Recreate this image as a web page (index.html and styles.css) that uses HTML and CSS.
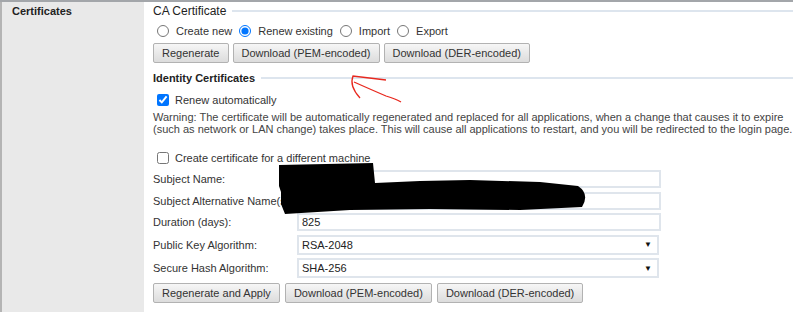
FILE: index.html
```html
<!DOCTYPE html>
<html lang="en">
<head>
    <meta charset="UTF-8">
    <title>Certificates</title>
    <link rel="stylesheet" href="styles.css">
</head>
<body>
    <div class="settings-row">
        <div class="settings-label">Certificates</div>
        <div class="settings-body">
            <div class="section-title"><span>CA Certificate</span></div>
            <div class="radio-row">
                <label><input type="radio" name="ca"> Create new</label>
                <label><input type="radio" name="ca" checked> Renew existing</label>
                <label><input type="radio" name="ca"> Import</label>
                <label><input type="radio" name="ca"> Export</label>
            </div>
            <div class="button-row">
                <button>Regenerate</button>
                <button>Download (PEM-encoded)</button>
                <button>Download (DER-encoded)</button>
            </div>

            <div class="section-title bold"><span>Identity Certificates</span></div>
            <label class="check-row"><input type="checkbox" checked> Renew automatically</label>
            <p class="warning">Warning: The certificate will be automatically regenerated and replaced for all applications, when a change that causes it to expire (such as network or LAN change) takes place. This will cause all applications to restart, and you will be redirected to the login page.</p>

            <label class="check-row machine"><input type="checkbox"> Create certificate for a different machine</label>
            <div class="form-grid">
                <label>Subject Name:</label>
                <input type="text" value="">
                <label>Subject Alternative Name(s):</label>
                <input type="text" value="">
                <label>Duration (days):</label>
                <input type="text" value="825">
                <label>Public Key Algorithm:</label>
                <div class="select">RSA-2048<span class="caret">&#9660;</span></div>
                <label>Secure Hash Algorithm:</label>
                <div class="select">SHA-256<span class="caret">&#9660;</span></div>
            </div>
            <div class="button-row bottom">
                <button>Regenerate and Apply</button>
                <button>Download (PEM-encoded)</button>
                <button>Download (DER-encoded)</button>
            </div>
        </div>
    </div>

    <!-- redaction and pen mark drawn over the screenshot -->
    <svg class="overlay" width="800" height="329" viewBox="0 0 800 329">
        <path d="M279 165 L373 163 L375 183 L420 181 L470 180 L540 182 L578 186 Q590 194 582 207 L520 210 L430 209 L350 210 L285 214 L281 204 L281 192 L279 186 Z" fill="#000"/>
        <path d="M386 80 Q370 78 353 76 Q349 86 360 98" fill="none" stroke="#e8281e" stroke-width="1.3"/>
        <path d="M354 82 Q372 90 386 96 Q396 99 401 102" fill="none" stroke="#e8281e" stroke-width="1.3"/>
    </svg>
</body>
</html>
```

FILE: styles.css
```css
body {
    margin: 0;
    font-family: Arial, "Liberation Sans", sans-serif;
    font-size: 11px;
    color: #333;
    background: #fff;
}
.settings-row {
    display: flex;
    width: 793px;
    border-top: 2px solid #a3a6aa;
}
.settings-label {
    width: 132px;
    height: 307px;
    padding: 3px 0 0 10px;
    background: #e9e9e9;
    border-left: 2px solid #b4b4b4;
    font-weight: bold;
    color: #222;
}
.settings-body {
    flex: 1;
    padding: 0 0 0 9px;
}
.section-title {
    display: flex;
    align-items: center;
    font-size: 12px;
    color: #222;
    height: 18px;
}
.section-title::after {
    content: "";
    flex: 1;
    height: 0;
    border-top: 2px solid #dde5ee;
    margin-left: 6px;
}
.section-title.bold {
    font-weight: bold;
    font-size: 11px;
    margin-top: 6px;
}
.radio-row {
    display: flex;
    gap: 3px;
    height: 20px;
    align-items: center;
    margin-top: 1px;
}
.radio-row label,
.check-row {
    display: flex;
    align-items: center;
    color: #333;
}
input[type="radio"],
input[type="checkbox"] {
    margin: 0 7px 0 4px;
    width: 12px;
    height: 12px;
}
.check-row input[type="checkbox"] {
    margin-right: 6px;
}
.button-row {
    display: flex;
    gap: 4px;
    margin-top: 2px;
}
button {
    font-family: Arial, "Liberation Sans", sans-serif;
    font-size: 11px;
    color: #333;
    height: 20px;
    padding: 0 8px;
    border: 1px solid #b2b2b2;
    border-radius: 2px;
    background: linear-gradient(#f6f6f6, #dcdcdc);
}
.check-row {
    height: 18px;
    margin-top: 4px;
}
.warning {
    margin: 2px 0 0;
    line-height: 12px;
    color: #444;
}
.check-row.machine {
    margin-top: 14px;
}
.form-grid {
    display: grid;
    grid-template-columns: 144px 364px;
    row-gap: 3.5px;
    align-items: center;
    margin-top: 3px;
}
.form-grid label {
    color: #333;
}
.form-grid input,
.select {
    box-sizing: border-box;
    height: 18px;
    border: 2px solid #dfe5ec;
    font-family: Arial, "Liberation Sans", sans-serif;
    font-size: 11px;
    color: #222;
    padding: 0 3px;
    margin: 0;
}
.select {
    display: flex;
    align-items: center;
    justify-content: space-between;
    height: 20px;
    width: 362px;
    padding: 0 5px 0 3px;
}
.caret {
    font-size: 8px;
    color: #111;
}
.button-row.bottom {
    margin-top: 5px;
    gap: 5px;
}
.overlay {
    position: absolute;
    left: 0;
    top: 0;
    pointer-events: none;
}
```
